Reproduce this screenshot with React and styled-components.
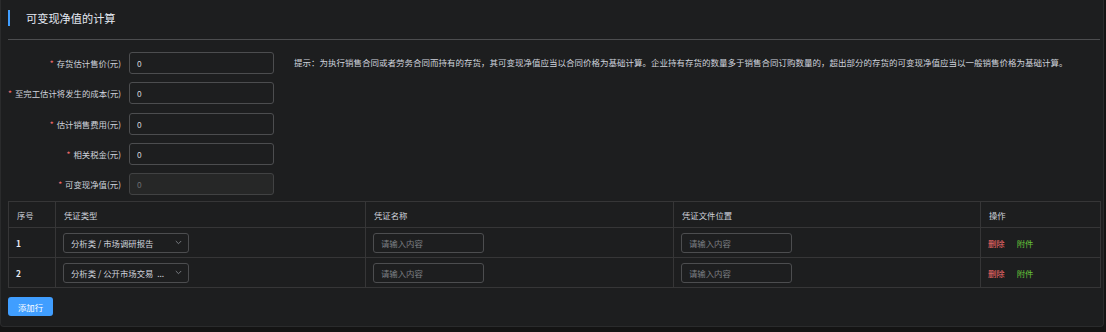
import React from 'react';
import styled, { createGlobalStyle } from 'styled-components';

const GlobalStyle = createGlobalStyle`
    html, body {
        margin: 0;
        padding: 0;
        background: #141414;
    }
    body {
        font-family: "Noto Sans CJK SC", "Noto Sans", sans-serif;
        color: #cfd3dc;
    }
    * { box-sizing: border-box; }
`;

const Card = styled.div`
    width: 1104px;
    height: 327px;
    background: #1d1e1f;
    border: 1px solid #2a2b2c;
    border-top: none;
    border-radius: 0 0 4px 4px;
    padding: 0 3px 0 7px;
`;

const Header = styled.div`
    height: 40px;
    display: flex;
    align-items: center;
    border-bottom: 1px solid #4c4d4f;
    padding-bottom: 3px;
`;

const Bar = styled.span`
    width: 2px;
    height: 16px;
    background: #409eff;
    margin-right: 16px;
`;

const Title = styled.h1`
    margin: 0;
    font-size: 11.2px;
    font-weight: 400;
    color: #e5eaf3;
`;

const FormArea = styled.div`
    display: flex;
    align-items: flex-start;
    padding-top: 12px;
`;

const Fields = styled.div`
    display: flex;
    flex-direction: column;
    gap: 8.3px;
`;

const FieldRow = styled.div`
    display: flex;
    align-items: center;
`;

const Label = styled.label`
    width: 121px;
    padding-right: 8px;
    text-align: right;
    font-size: 8.4px;
    color: #cfd3dc;
    white-space: nowrap;
    &::before {
        content: '*';
        color: #f56c6c;
        margin-right: 3px;
    }
`;

const Input = styled.input`
    width: ${p => p.$w || 145}px;
    height: ${p => p.$h || 22}px;
    border: 1px solid ${p => (p.disabled ? '#414243' : '#4c4d4f')};
    border-radius: 3px;
    background: ${p => (p.disabled ? '#262727' : 'transparent')};
    color: ${p => (p.disabled ? '#6c6e72' : '#cfd3dc')};
    font-family: inherit;
    font-size: 8.4px;
    padding: 0 7px;
    outline: none;
    &::placeholder {
        color: #7d8085;
    }
`;

const Tip = styled.p`
    margin: 0 0 0 20px;
    line-height: 20px;
    font-size: 8.5px;
    color: #cfd3dc;
    white-space: nowrap;
`;

const Table = styled.table`
    margin-top: 6px;
    width: 1093px;
    border-collapse: collapse;
    font-size: 8.4px;
    border: 1px solid #363637;
`;

const Th = styled.th`
    height: 26px;
    padding: 0 8px;
    text-align: left;
    font-weight: 400;
    color: #cfd3dc;
    border: 1px solid #363637;
    width: ${p => p.$w}px;
`;

const Td = styled.td`
    height: 30px;
    padding: 0 7px;
    border: 1px solid #363637;
    color: #e5eaf3;
    font-weight: ${p => (p.$bold ? 600 : 400)};
`;

const Select = styled.div`
    width: 126px;
    height: 20px;
    border: 1px solid #4c4d4f;
    border-radius: 3px;
    display: flex;
    align-items: center;
    padding: 0 6px 0 7px;
    color: #cfd3dc;
    font-weight: 400;
    span {
        flex: 1;
        white-space: nowrap;
        overflow: hidden;
    }
`;

const Actions = styled.div`
    display: flex;
    gap: 12px;
`;

const LinkBtn = styled.span`
    color: ${p => (p.$danger ? '#f56c6c' : '#67c23a')};
    cursor: pointer;
`;

const AddButton = styled.button`
    margin-top: 9px;
    width: 45px;
    height: 19px;
    border: none;
    border-radius: 3px;
    background: #409eff;
    color: #fff;
    font-family: inherit;
    font-size: 8.4px;
    padding: 0;
`;

const Chevron = () => (
    <svg width="7" height="5" viewBox="0 0 7 5" fill="none">
        <path d="M0.8 1 L3.5 3.7 L6.2 1" stroke="#8d9095" strokeWidth="0.8" />
    </svg>
);

const fields = [
    ['存货估计售价(元)', '0'],
    ['至完工估计将发生的成本(元)', '0'],
    ['估计销售费用(元)', '0'],
    ['相关税金(元)', '0'],
    ['可变现净值(元)', '0', true],
];

const rows = [
    { type: '分析类 / 市场调研报告' },
    { type: '分析类 / 公开市场交易  ...' },
];

export default function App() {
    return (
        <>
            <GlobalStyle />
            <Card>
                <Header>
                    <Bar />
                    <Title>可变现净值的计算</Title>
                </Header>
                <FormArea>
                    <Fields>
                        {fields.map(([label, value, disabled]) => (
                            <FieldRow key={label}>
                                <Label>{label}</Label>
                                <Input defaultValue={value} disabled={disabled} />
                            </FieldRow>
                        ))}
                    </Fields>
                    <Tip>
                        提示：为执行销售合同或者劳务合同而持有的存货，其可变现净值应当以合同价格为基础计算。企业持有存货的数量多于销售合同订购数量的，超出部分的存货的可变现净值应当以一般销售价格为基础计算。
                    </Tip>
                </FormArea>
                <Table>
                    <thead>
                        <tr>
                            <Th $w={47}>序号</Th>
                            <Th $w={310}>凭证类型</Th>
                            <Th $w={308}>凭证名称</Th>
                            <Th $w={307}>凭证文件位置</Th>
                            <Th>操作</Th>
                        </tr>
                    </thead>
                    <tbody>
                        {rows.map((r, idx) => (
                            <tr key={idx}>
                                <Td $bold>{idx + 1}</Td>
                                <Td>
                                    <Select>
                                        <span style={{ whiteSpace: 'pre' }}>{r.type}</span>
                                        <Chevron />
                                    </Select>
                                </Td>
                                <Td>
                                    <Input $w={111} $h={20} placeholder="请输入内容" />
                                </Td>
                                <Td>
                                    <Input $w={111} $h={20} placeholder="请输入内容" />
                                </Td>
                                <Td>
                                    <Actions>
                                        <LinkBtn $danger>删除</LinkBtn>
                                        <LinkBtn>附件</LinkBtn>
                                    </Actions>
                                </Td>
                            </tr>
                        ))}
                    </tbody>
                </Table>
                <AddButton>添加行</AddButton>
            </Card>
        </>
    );
}
